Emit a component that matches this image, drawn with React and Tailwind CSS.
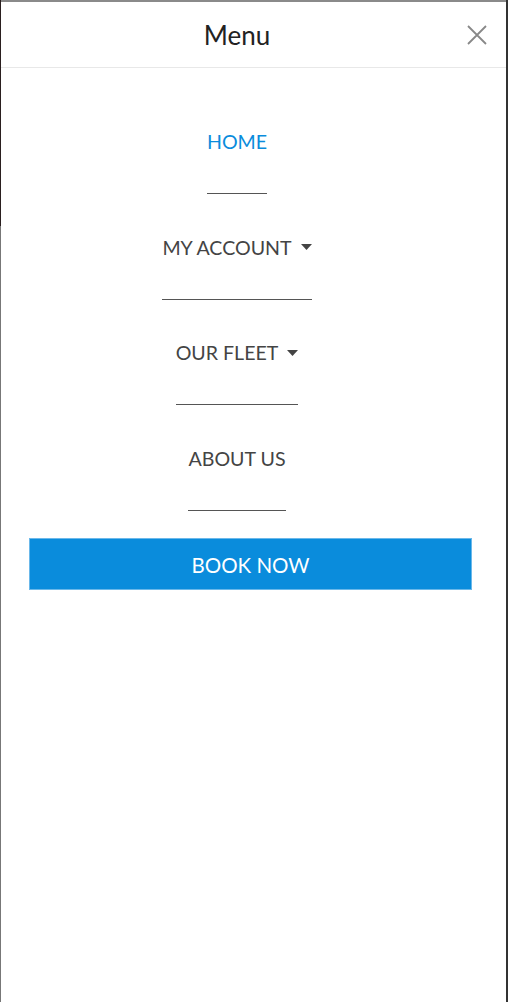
import React from 'react';

const Caret = () => (
  <svg className="ml-[9px] h-[6px] w-[11px]" viewBox="0 0 11 6" fill="currentColor">
    <path d="M0 0h11L5.5 6z" />
  </svg>
);

const items = [
  { label: 'HOME', active: true },
  { label: 'MY ACCOUNT', caret: true },
  { label: 'OUR FLEET', caret: true },
  { label: 'ABOUT US' },
];

const App = () => {
  return (
    <div className="flex h-[1002px] w-[508px] bg-white" style={{ fontFamily: 'Lato, "Open Sans", sans-serif' }}>
      <div className="flex w-px flex-col">
        <div className="h-[226px] bg-[#2a1f1f]" />
        <div className="flex-1 bg-[#777]" />
      </div>
      <div className="flex flex-1 flex-col border-t-2 border-[#8a8a8a]">
        <header className="flex h-[66px] items-center border-b border-[#e8e8e8] pr-[33px]">
          <h1 className="flex-1 text-center text-[26px] leading-none text-[#222]">Menu</h1>
          <button className="absolute right-[21px] top-[25px] text-[#888]">
            <svg className="h-[20px] w-[20px]" viewBox="0 0 20 20" fill="none" stroke="currentColor" strokeWidth="1.8">
              <path d="M1 1l18 18M19 1L1 19" />
            </svg>
          </button>
        </header>
        <nav className="pr-[33px] pt-[60px]">
          <ul className="flex flex-col gap-[39.5px]">
            {items.map((item) => (
              <li key={item.label} className="text-center">
                <a
                  href="#"
                  className={`inline-flex items-center border-b border-[#555] pb-[38px] text-[19.6px] leading-[27px] ${
                    item.active ? 'text-[#0a8cdc]' : 'text-[#444]'
                  }`}
                >
                  {item.label}
                  {item.caret && <Caret />}
                </a>
              </li>
            ))}
          </ul>
        </nav>
        <div className="pl-[28px] pr-[34px] pt-[27px]">
          <button className="h-[52px] w-full border border-[#6ab8ea] bg-[#0a8cdc] pt-[3px] text-[20.5px] text-white">
            BOOK NOW
          </button>
        </div>
      </div>
      <div className="w-[2px] bg-[#333]" />
    </div>
  );
};

export default App;
